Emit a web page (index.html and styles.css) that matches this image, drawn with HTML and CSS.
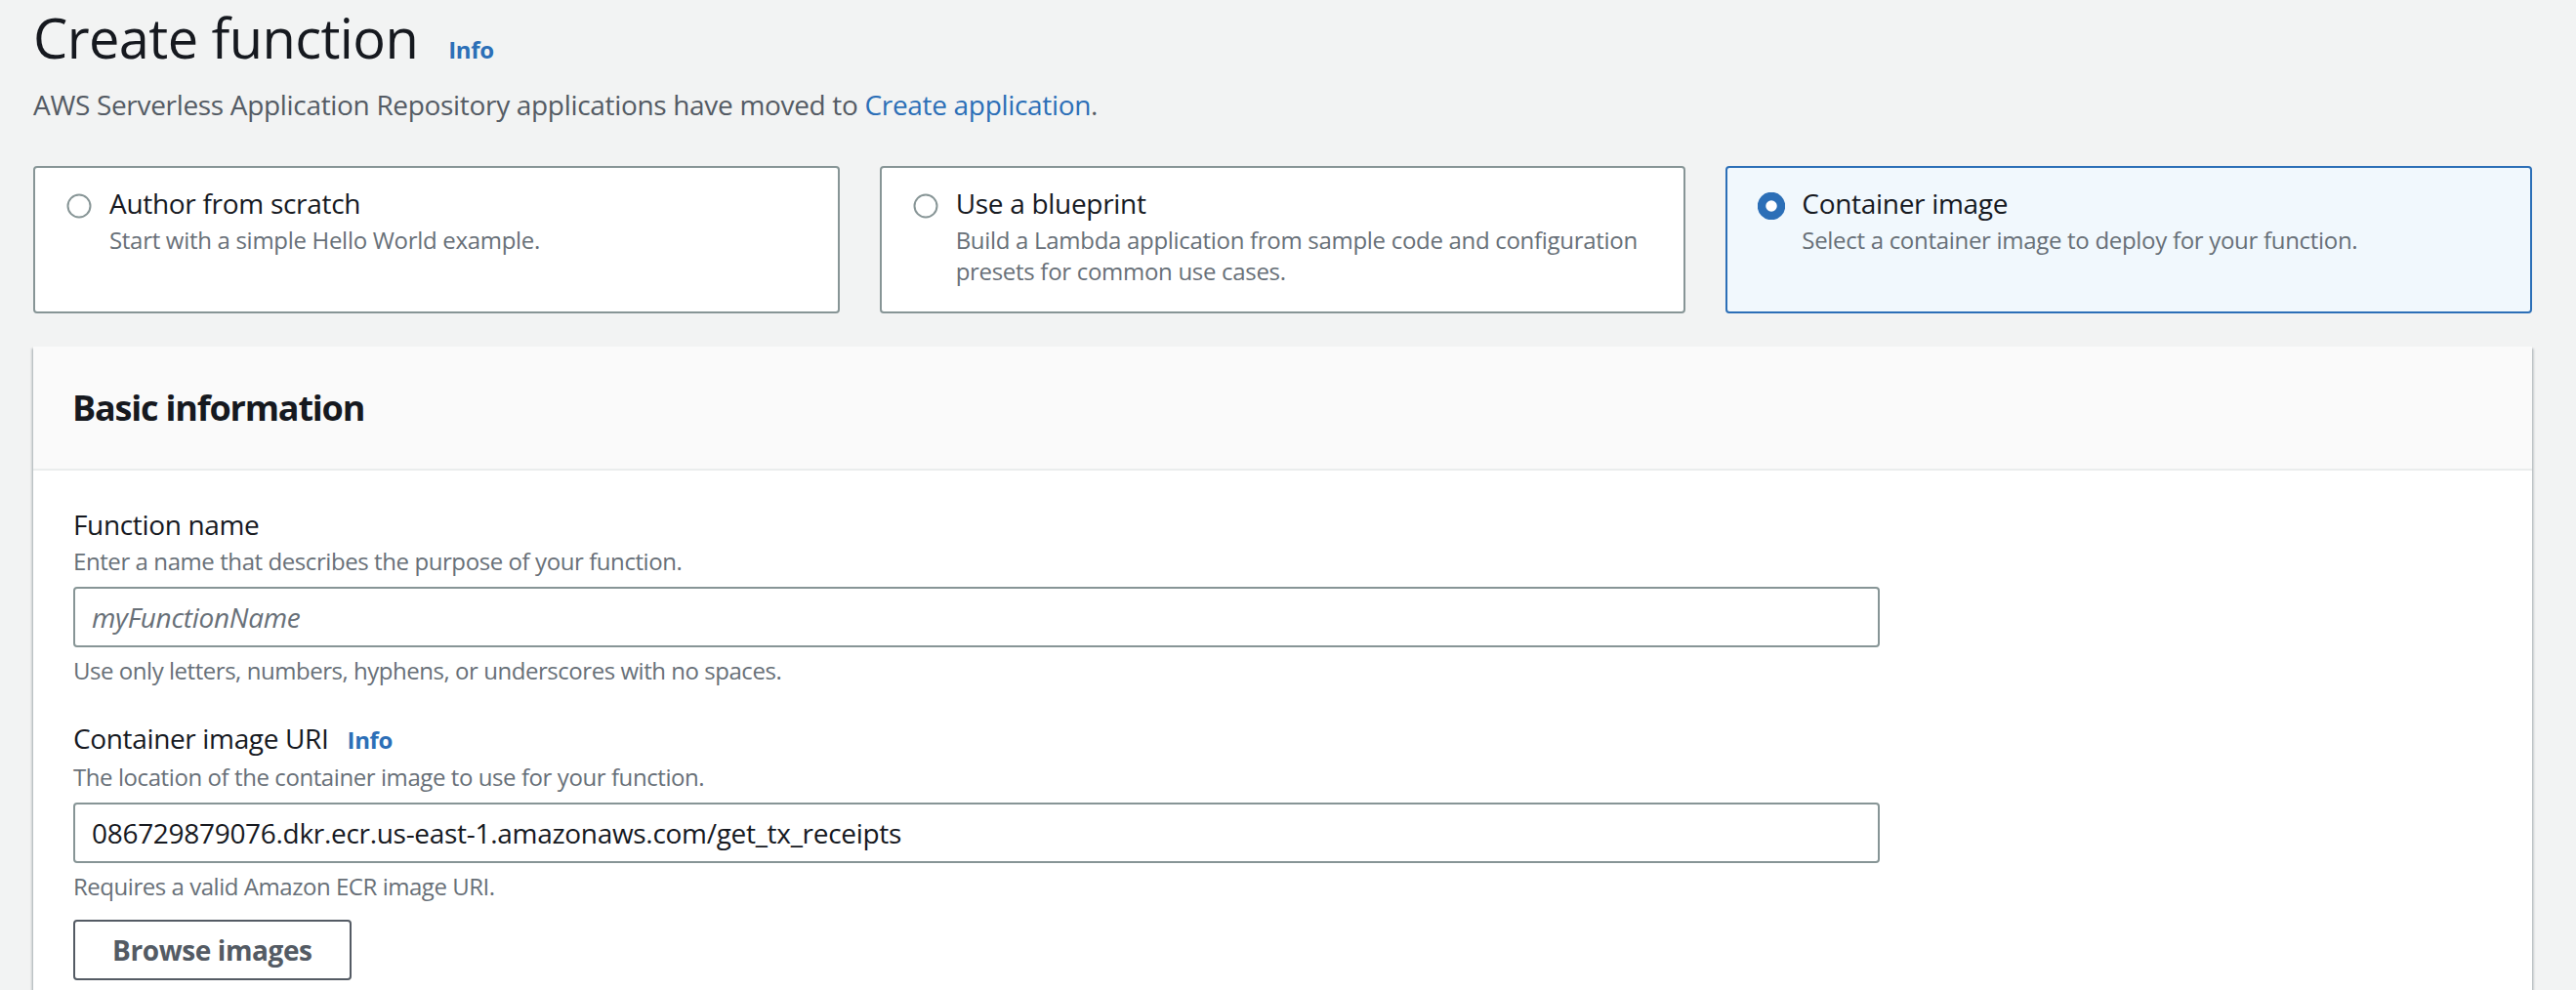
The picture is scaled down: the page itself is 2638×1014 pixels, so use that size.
FILE: index.html
```html
<!DOCTYPE html>
<html lang="en">
<head>
<meta charset="utf-8">
<title>Create function</title>
<link rel="stylesheet" href="styles.css">
</head>
<body>
<main class="page">
  <header class="page-header">
    <div class="title-row">
      <h1 class="title">Create function</h1>
      <a class="info-link info-title" href="#">Info</a>
    </div>
    <p class="subtitle">AWS Serverless Application Repository applications have moved to <a class="link" href="#">Create application</a>.</p>
  </header>

  <div class="tiles">
    <label class="tile">
      <span class="radio">
        <svg viewBox="0 0 28 28" width="28" height="28"><circle cx="14" cy="14" r="11.5" fill="#fff" stroke="#879596" stroke-width="2"/></svg>
      </span>
      <span class="tile-text">
        <span class="tile-title">Author from scratch</span>
        <span class="tile-desc">Start with a simple Hello World example.</span>
      </span>
    </label>
    <label class="tile">
      <span class="radio">
        <svg viewBox="0 0 28 28" width="28" height="28"><circle cx="14" cy="14" r="11.5" fill="#fff" stroke="#879596" stroke-width="2"/></svg>
      </span>
      <span class="tile-text">
        <span class="tile-title">Use a blueprint</span>
        <span class="tile-desc">Build a Lambda application from sample code and configuration presets for common use cases.</span>
      </span>
    </label>
    <label class="tile tile-selected">
      <span class="radio">
        <svg viewBox="0 0 28 28" width="28" height="28"><circle cx="14" cy="14" r="10" fill="#fff" stroke="#2c6fb7" stroke-width="8.5"/></svg>
      </span>
      <span class="tile-text">
        <span class="tile-title">Container image</span>
        <span class="tile-desc">Select a container image to deploy for your function.</span>
      </span>
    </label>
  </div>

  <section class="panel">
    <div class="panel-header">
      <h2 class="panel-title">Basic information</h2>
    </div>
    <div class="panel-body">
      <div class="field">
        <div class="field-label">Function name</div>
        <div class="field-desc">Enter a name that describes the purpose of your function.</div>
        <div class="input"><span class="placeholder">myFunctionName</span></div>
        <div class="field-constraint">Use only letters, numbers, hyphens, or underscores with no spaces.</div>
      </div>
      <div class="field">
        <div class="field-label">Container image URI <a class="info-link info-label" href="#">Info</a></div>
        <div class="field-desc">The location of the container image to use for your function.</div>
        <div class="input"><span class="value">086729879076.dkr.ecr.us-east-1.amazonaws.com/get_tx_receipts</span></div>
        <div class="field-constraint">Requires a valid Amazon ECR image URI.</div>
        <button class="button" type="button">Browse images</button>
      </div>
    </div>
  </section>
</main>
</body>
</html>
```

FILE: styles.css
```css
* { box-sizing: border-box; }

html, body {
  margin: 0;
  padding: 0;
  background: #f2f3f3;
  font-family: "Open Sans", "Noto Sans", sans-serif;
  color: #16191f;
  height: 1014px;
  overflow: hidden;
}

.page {
  padding: 0 45px 0 34px;
}

.page-header {
  padding-top: 2px;
}

.title-row {
  display: flex;
  align-items: baseline;
  gap: 31px;
}

.title {
  margin: 0;
  font-size: 56px;
  line-height: 72px;
  font-weight: 400;
  letter-spacing: -0.6px;
  color: #16191f;
}

.info-link {
  color: #2c6fb7;
  font-weight: 700;
  font-size: 24px;
  letter-spacing: -0.3px;
  text-decoration: none;
}

.subtitle {
  margin: 13px 0 0 0;
  font-size: 28px;
  line-height: 40px;
  letter-spacing: -0.32px;
  color: #545b64;
}

.link {
  color: #2c6fb7;
  text-decoration: none;
}

.tiles {
  display: grid;
  grid-template-columns: repeat(3, 1fr);
  gap: 41px;
  margin-top: 43px;
}

.tile {
  display: flex;
  align-items: flex-start;
  gap: 17px;
  height: 151px;
  padding: 14px 20px 16px 31px;
  background: #ffffff;
  border: 2px solid #879596;
  border-radius: 4px;
}

.tile-selected {
  background: #f1f8fd;
  border-color: #2c6fb7;
}

.radio {
  flex: none;
  width: 28px;
  height: 28px;
  margin-top: 11px;
}

.radio svg { display: block; }

.tile-text {
  display: flex;
  flex-direction: column;
}

.tile-title {
  font-size: 28px;
  line-height: 44px;
  letter-spacing: -0.3px;
  color: #16191f;
}

.tile-desc {
  font-size: 24px;
  line-height: 32px;
  letter-spacing: -0.3px;
  color: #687078;
}

.panel {
  margin-top: 34px;
  background: #ffffff;
  box-shadow: 0 2px 2px 0 rgba(0, 28, 36, 0.3), 2px 2px 2px 0 rgba(0, 28, 36, 0.15), -2px 2px 2px 0 rgba(0, 28, 36, 0.15);
}

.panel-header {
  background: #fafafa;
  border-bottom: 2px solid #eaeded;
  height: 127px;
  padding: 0 40px;
  display: flex;
  align-items: center;
}

.panel-title {
  margin: 0;
  font-size: 36px;
  line-height: 48px;
  font-weight: 700;
  color: #16191f;
  letter-spacing: -1.2px;
}

.panel-body {
  padding: 33px 41px 40px 41px;
  display: flex;
  flex-direction: column;
  gap: 31px;
}

.field {
  display: flex;
  flex-direction: column;
  align-items: flex-start;
}

.field-label {
  font-size: 28px;
  line-height: 44px;
  letter-spacing: -0.35px;
  color: #16191f;
  display: flex;
  align-items: baseline;
  gap: 19px;
}

.field-desc {
  font-size: 24px;
  line-height: 32px;
  letter-spacing: -0.42px;
  color: #687078;
}

.field-constraint {
  margin-top: 8px;
  font-size: 24px;
  line-height: 32px;
  letter-spacing: -0.46px;
  color: #687078;
}

.input {
  margin-top: 10px;
  width: 1850px;
  height: 62px;
  border: 2px solid #879596;
  border-radius: 4px;
  background: #ffffff;
  padding: 0 17px;
  display: flex;
  align-items: center;
  font-size: 28px;
  letter-spacing: -0.3px;
}

.placeholder {
  font-style: italic;
  color: #687078;
}

.value {
  color: #16191f;
}

.button {
  margin-top: 18px;
  height: 62px;
  padding: 0 38px;
  background: #ffffff;
  border: 2px solid #545b64;
  border-radius: 4px;
  font-family: "Open Sans", "Noto Sans", sans-serif;
  font-size: 28px;
  font-weight: 700;
  letter-spacing: -0.4px;
  color: #545b64;
}
```
